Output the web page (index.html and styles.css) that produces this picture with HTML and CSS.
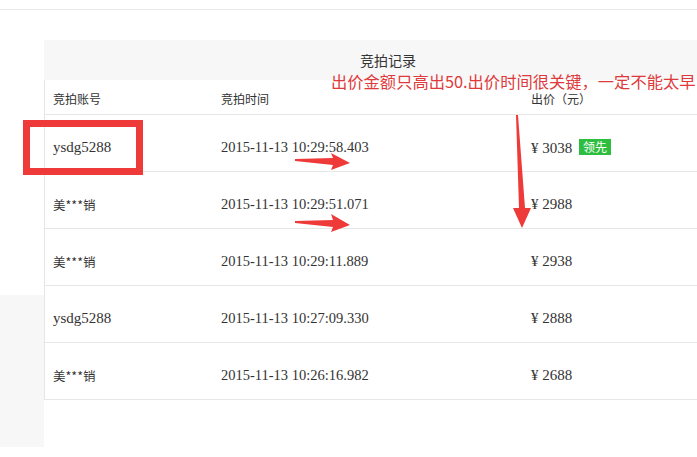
FILE: index.html
```html
<!DOCTYPE html>
<html lang="zh-CN">
<head>
  <meta charset="UTF-8" />
  <title>竞拍记录</title>
  <link rel="stylesheet" href="styles.css">
</head>
<body>
  <div class="top-bar"></div>

  <div class="page">
    <div class="side">
      <div class="side-block"></div>
    </div>

    <div class="record">
      <div class="record-title">竞拍记录</div>
      <div class="record-table">
        <div class="row head">
          <span>竞拍账号</span>
          <span>竞拍时间</span>
          <span>出价（元）</span>
        </div>
        <div class="row">
          <span class="user latin">ysdg5288</span>
          <span class="time">2015-11-13 10:29:58.403</span>
          <span class="price">¥ 3038 <em class="lead">领先</em></span>
        </div>
        <div class="row">
          <span class="user">美***销</span>
          <span class="time">2015-11-13 10:29:51.071</span>
          <span class="price">¥ 2988</span>
        </div>
        <div class="row">
          <span class="user">美***销</span>
          <span class="time">2015-11-13 10:29:11.889</span>
          <span class="price">¥ 2938</span>
        </div>
        <div class="row">
          <span class="user latin">ysdg5288</span>
          <span class="time">2015-11-13 10:27:09.330</span>
          <span class="price">¥ 2888</span>
        </div>
        <div class="row">
          <span class="user">美***销</span>
          <span class="time">2015-11-13 10:26:16.982</span>
          <span class="price">¥ 2688</span>
        </div>
      </div>
    </div>
  </div>

  <!-- hand-drawn notes pasted over the screenshot -->
  <div class="note-text">出价金额只高出50.出价时间很关键，一定不能太早</div>
  <div class="note-box"></div>
  <svg class="note-arrows" width="697" height="457" viewBox="0 0 697 457">
    <polygon points="295,159 333,158 331,153 350,163 331,170 333,165 295,161" />
    <polygon points="295,221 333,220 331,214 350,225 331,232 333,227 295,223" />
    <polygon points="516,115 518,115 525,208 531,208 522,228 513,208 519,208" />
  </svg>
</body>
</html>
```

FILE: styles.css
```css
body {
  margin: 0;
  width: 697px;
  height: 457px;
  overflow: hidden;
  position: relative;
  background: #fff;
  color: #333;
  font-family: "Noto Sans CJK SC", "Noto Sans", sans-serif;
}
.top-bar {
  height: 9px;
  border-bottom: 1px solid #e9e9e9;
}
.page {
  display: flex;
  margin-top: 30px;
}
.side {
  width: 44px;
  flex-shrink: 0;
}
.side-block {
  margin-top: 255px;
  height: 152px;
  background: #f7f7f7;
}
.record {
  flex: 1;
  min-width: 0;
}
.record-title {
  height: 40px;
  line-height: 40px;
  padding-left: 35px;
  background: #f7f7f7;
  text-align: center;
  font-size: 14px;
}
.record-table {
  border-left: 1px solid #e6e6e6;
}
.row {
  display: grid;
  grid-template-columns: 168px 310px 1fr;
  align-items: center;
  box-sizing: border-box;
  height: 57px;
  padding: 9px 0 0 8px;
  border-bottom: 1px solid #e6e6e6;
  font-size: 12px;
}
.row.head {
  height: 35px;
  padding-top: 3px;
  line-height: 14px;
}
.user {
  font-size: 12.5px;
}
.latin {
  font-family: "Liberation Serif", "DejaVu Serif", serif;
  font-size: 15px;
}
.time {
  font-family: "Liberation Serif", "DejaVu Serif", serif;
  font-size: 14.5px;
}
.price {
  font-family: "Liberation Serif", "DejaVu Serif", serif;
  font-size: 15px;
}
.lead {
  display: inline-block;
  margin-left: 3px;
  padding: 0 4px;
  height: 16px;
  line-height: 16px;
  background: #2dbe3f;
  color: #fff;
  font-style: normal;
  font-size: 12px;
  font-family: "Noto Sans CJK SC", sans-serif;
  vertical-align: 1px;
}
.note-text {
  position: absolute;
  left: 331px;
  top: 72px;
  font-size: 16.3px;
  line-height: 18px;
  color: #de3a3b;
  white-space: nowrap;
}
.note-box {
  position: absolute;
  left: 23px;
  top: 120px;
  width: 120px;
  height: 55px;
  box-sizing: border-box;
  border: 7px solid #ef3a3a;
}
.note-arrows {
  position: absolute;
  left: 0;
  top: 0;
  fill: #ef3a3a;
}
```
